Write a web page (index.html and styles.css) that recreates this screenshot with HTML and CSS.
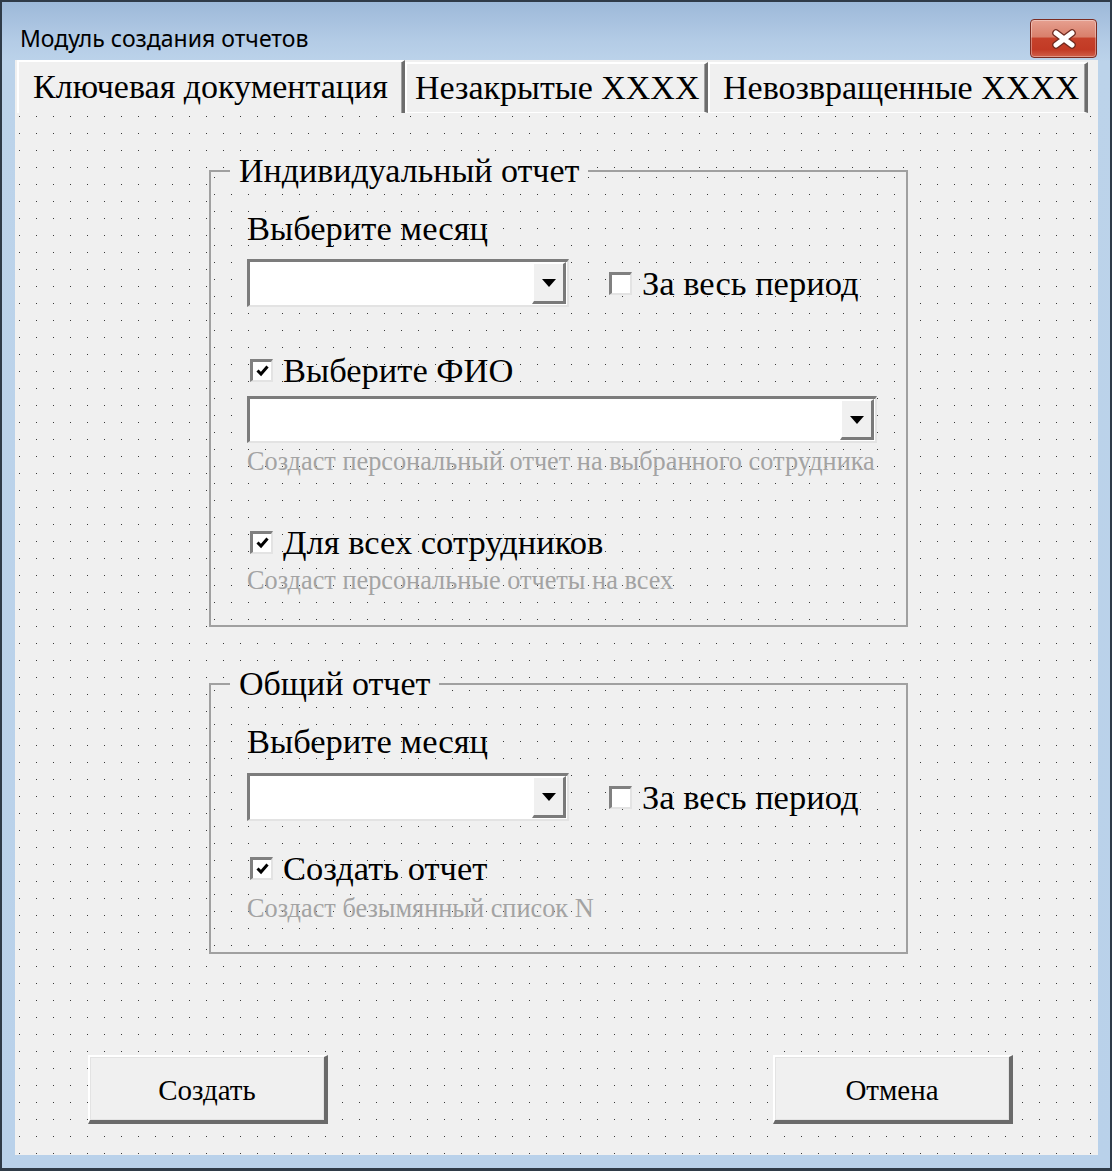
FILE: index.html
```html
<!DOCTYPE html>
<html lang="ru">
<head>
<meta charset="utf-8">
<title>Модуль создания отчетов</title>
<link rel="stylesheet" href="styles.css">
</head>
<body>
<div class="window">
  <div class="titlebar">
    <span class="title">Модуль создания отчетов</span>
    <div class="close">
      <svg width="26" height="20" viewBox="0 0 26 20">
        <path d="M5 4 L21 16 M21 4 L5 16" stroke="#6e2a20" stroke-width="7.5" stroke-linecap="round"/>
        <path d="M5 4 L21 16 M21 4 L5 16" stroke="#ffffff" stroke-width="5" stroke-linecap="round"/>
      </svg>
    </div>
  </div>
  <div class="client">
    <div class="tabs">
      <div class="tab tab-1 active">Ключевая документация</div>
      <div class="tab tab-2">Незакрытые XXXX</div>
      <div class="tab tab-3">Невозвращенные XXXX</div>
    </div>
    <div class="page">
      <fieldset class="frame frame-1">
        <legend>Индивидуальный отчет</legend>
        <div class="label">Выберите месяц</div>
        <div class="row">
          <div class="combo combo-small"><div class="drop"><span class="arrow"></span></div></div>
          <div class="check check-period"><span class="box"></span><span>За весь период</span></div>
        </div>
        <div class="check check-fio"><span class="box checked"><svg width="13" height="12" viewBox="0 0 13 12"><path d="M1.5 5.5 L5 9 L11.5 1.5" fill="none" stroke="#000" stroke-width="3"/></svg></span><span>Выберите ФИО</span></div>
        <div class="combo combo-wide"><div class="drop"><span class="arrow"></span></div></div>
        <div class="hint hint-1">Создаст персональный отчет на выбранного сотрудника</div>
        <div class="check check-all"><span class="box checked"><svg width="13" height="12" viewBox="0 0 13 12"><path d="M1.5 5.5 L5 9 L11.5 1.5" fill="none" stroke="#000" stroke-width="3"/></svg></span><span>Для всех сотрудников</span></div>
        <div class="hint hint-2">Создаст персональные отчеты на всех</div>
      </fieldset>
      <fieldset class="frame frame-2">
        <legend>Общий отчет</legend>
        <div class="label">Выберите месяц</div>
        <div class="row row-2">
          <div class="combo combo-small"><div class="drop"><span class="arrow"></span></div></div>
          <div class="check check-period"><span class="box"></span><span>За весь период</span></div>
        </div>
        <div class="check check-create"><span class="box checked"><svg width="13" height="12" viewBox="0 0 13 12"><path d="M1.5 5.5 L5 9 L11.5 1.5" fill="none" stroke="#000" stroke-width="3"/></svg></span><span>Создать отчет</span></div>
        <div class="hint hint-3">Создаст безымянный список N</div>
      </fieldset>
      <div class="buttons">
        <div class="btn">Создать</div>
        <div class="btn">Отмена</div>
      </div>
    </div>
  </div>
</div>
</body>
</html>
```

FILE: styles.css
```css
* { box-sizing: border-box; }
html, body { margin: 0; padding: 0; background: #ffffff; }

.window {
  width: 1112px;
  height: 1171px;
  border: 2px solid #2f3b48;
  border-bottom-width: 3px;
  background: linear-gradient(#9db9d9 0px, #b4cce6 40px, #bcd3ea 60px, #b9d1ea 100%);
  display: flex;
  flex-direction: column;
}

.titlebar {
  height: 58px;
  display: flex;
  align-items: flex-start;
  justify-content: space-between;
}

.title {
  font-family: "Noto Sans", "Open Sans", sans-serif;
  font-size: 23px;
  line-height: 28px;
  color: #000;
  margin: 22px 0 0 18px;
}

.close {
  width: 67px;
  height: 39px;
  margin: 17px 13px 0 0;
  border: 1px solid #7b2c22;
  border-radius: 4px;
  background: linear-gradient(#e6a090 0%, #d9806c 45%, #c6412b 50%, #c23a25 80%, #d0604a 100%);
  box-shadow: inset 0 0 0 1px rgba(255,255,255,0.35);
  display: flex;
  align-items: center;
  justify-content: center;
}

.client {
  margin: 0 12px 0 13px;
  height: 1095px;
  background: #f0f0f0;
  display: flex;
  flex-direction: column;
}

.tabs {
  height: 53px;
  display: flex;
  align-items: flex-end;
  padding-left: 2px;
}

.tab {
  font-family: "Liberation Serif", "Times New Roman", serif;
  font-size: 34px;
  color: #000;
  background: #f0f0f0;
  border-top: 2px solid #ffffff;
  border-left: 2px solid #ffffff;
  border-right: 3px solid #6d6d6d;
  box-shadow: inset -1px 0 0 #a0a0a0;
  white-space: nowrap;
  overflow: hidden;
}

.tab.active {
  height: 53px;
  line-height: 49px;
}

.tab-1 { width: 388px; padding-left: 14px; }
.tab-2 { width: 303px; padding-left: 8px; height: 51px; line-height: 47px; border-bottom: 1px solid #ffffff; }
.tab-3 { width: 380px; padding-left: 13px; height: 51px; line-height: 47px; border-bottom: 1px solid #ffffff; }

.page {
  flex: 1;
  background-color: #f0f0f0;
  background-image: conic-gradient(at 1px 1px, transparent 75%, #3a3a3a 0);
  background-size: 17px 17px;
  background-position: 4px 3px;
  padding: 43px 0 0 0;
  font-family: "Liberation Serif", "Times New Roman", serif;
  color: #000;
}

.frame {
  margin: 0 0 0 194px;
  width: 699px;
  border: 2px solid #a0a0a0;
  padding: 0 0 0 36px;
  min-width: 0;
  background-color: #f0f0f0;
  background-image: conic-gradient(at 1px 1px, transparent 75%, #3a3a3a 0);
  background-size: 17px 17px;
  background-position: 3px 5px;
}

.frame legend {
  font-size: 34px;
  line-height: 30px;
  padding: 0 9px;
  margin-left: -17px;
  background: #f0f0f0;
}

.frame-1 { padding-bottom: 29px; }
.frame-2 { margin-top: 42px; padding-bottom: 28px; }

.label {
  font-size: 34.5px;
  line-height: 40px;
  margin-top: 22px;
}

.row {
  display: flex;
  align-items: center;
  margin-top: 11px;
  gap: 40px;
}
.row-2 { margin-top: 12px; }

.combo {
  height: 48px;
  background: #ffffff;
  border-style: solid;
  border-width: 3px 2px 2px 3px;
  border-color: #7c7c7c #e3e3e3 #e3e3e3 #7c7c7c;
  display: flex;
  justify-content: flex-end;
  padding: 0 1px 1px 0;
}

.combo-small { width: 322px; }
.combo-wide { width: 630px; height: 47px; margin-top: 6px; }

.drop {
  width: 34px;
  height: 100%;
  background: #f0f0f0;
  border-style: solid;
  border-width: 2px 3px 3px 2px;
  border-color: #ffffff #7a7a7a #7a7a7a #ffffff;
  display: flex;
  align-items: center;
  justify-content: center;
}

.arrow {
  width: 0;
  height: 0;
  border-left: 7.5px solid transparent;
  border-right: 7.5px solid transparent;
  border-top: 8px solid #000;
  margin-top: 1px;
}

.check {
  display: flex;
  align-items: center;
  gap: 10px;
  font-size: 34.5px;
  line-height: 40px;
  white-space: nowrap;
}

.box {
  width: 23px;
  height: 23px;
  flex: none;
  background: #ffffff;
  border-style: solid;
  border-width: 3px 2px 2px 3px;
  border-color: #808080 #e3e3e3 #e3e3e3 #808080;
  display: flex;
  align-items: center;
  justify-content: center;
}

.check-fio { margin: 43px 0 0 3px; }
.check-all { margin: 45px 0 0 3px; }
.check-create { margin: 27px 0 0 3px; }

.hint {
  font-size: 26.3px;
  line-height: 30px;
  color: #a3a3a3;
  white-space: nowrap;
}
.hint-1 { margin-top: 4px; }
.hint-2 { margin-top: 4px; }
.hint-3 { margin-top: 6px; }

.buttons {
  display: flex;
  gap: 445px;
  margin: 101px 0 0 73px;
}

.btn {
  width: 240px;
  height: 69px;
  font-size: 29px;
  line-height: 66px;
  text-align: center;
  background: #f0f0f0;
  border-style: solid;
  border-width: 2px 4px 4px 2px;
  border-color: #ffffff #6a6a6a #6a6a6a #ffffff;
  box-shadow: inset 0 0 0 1px #e3e3e3;
}
```
